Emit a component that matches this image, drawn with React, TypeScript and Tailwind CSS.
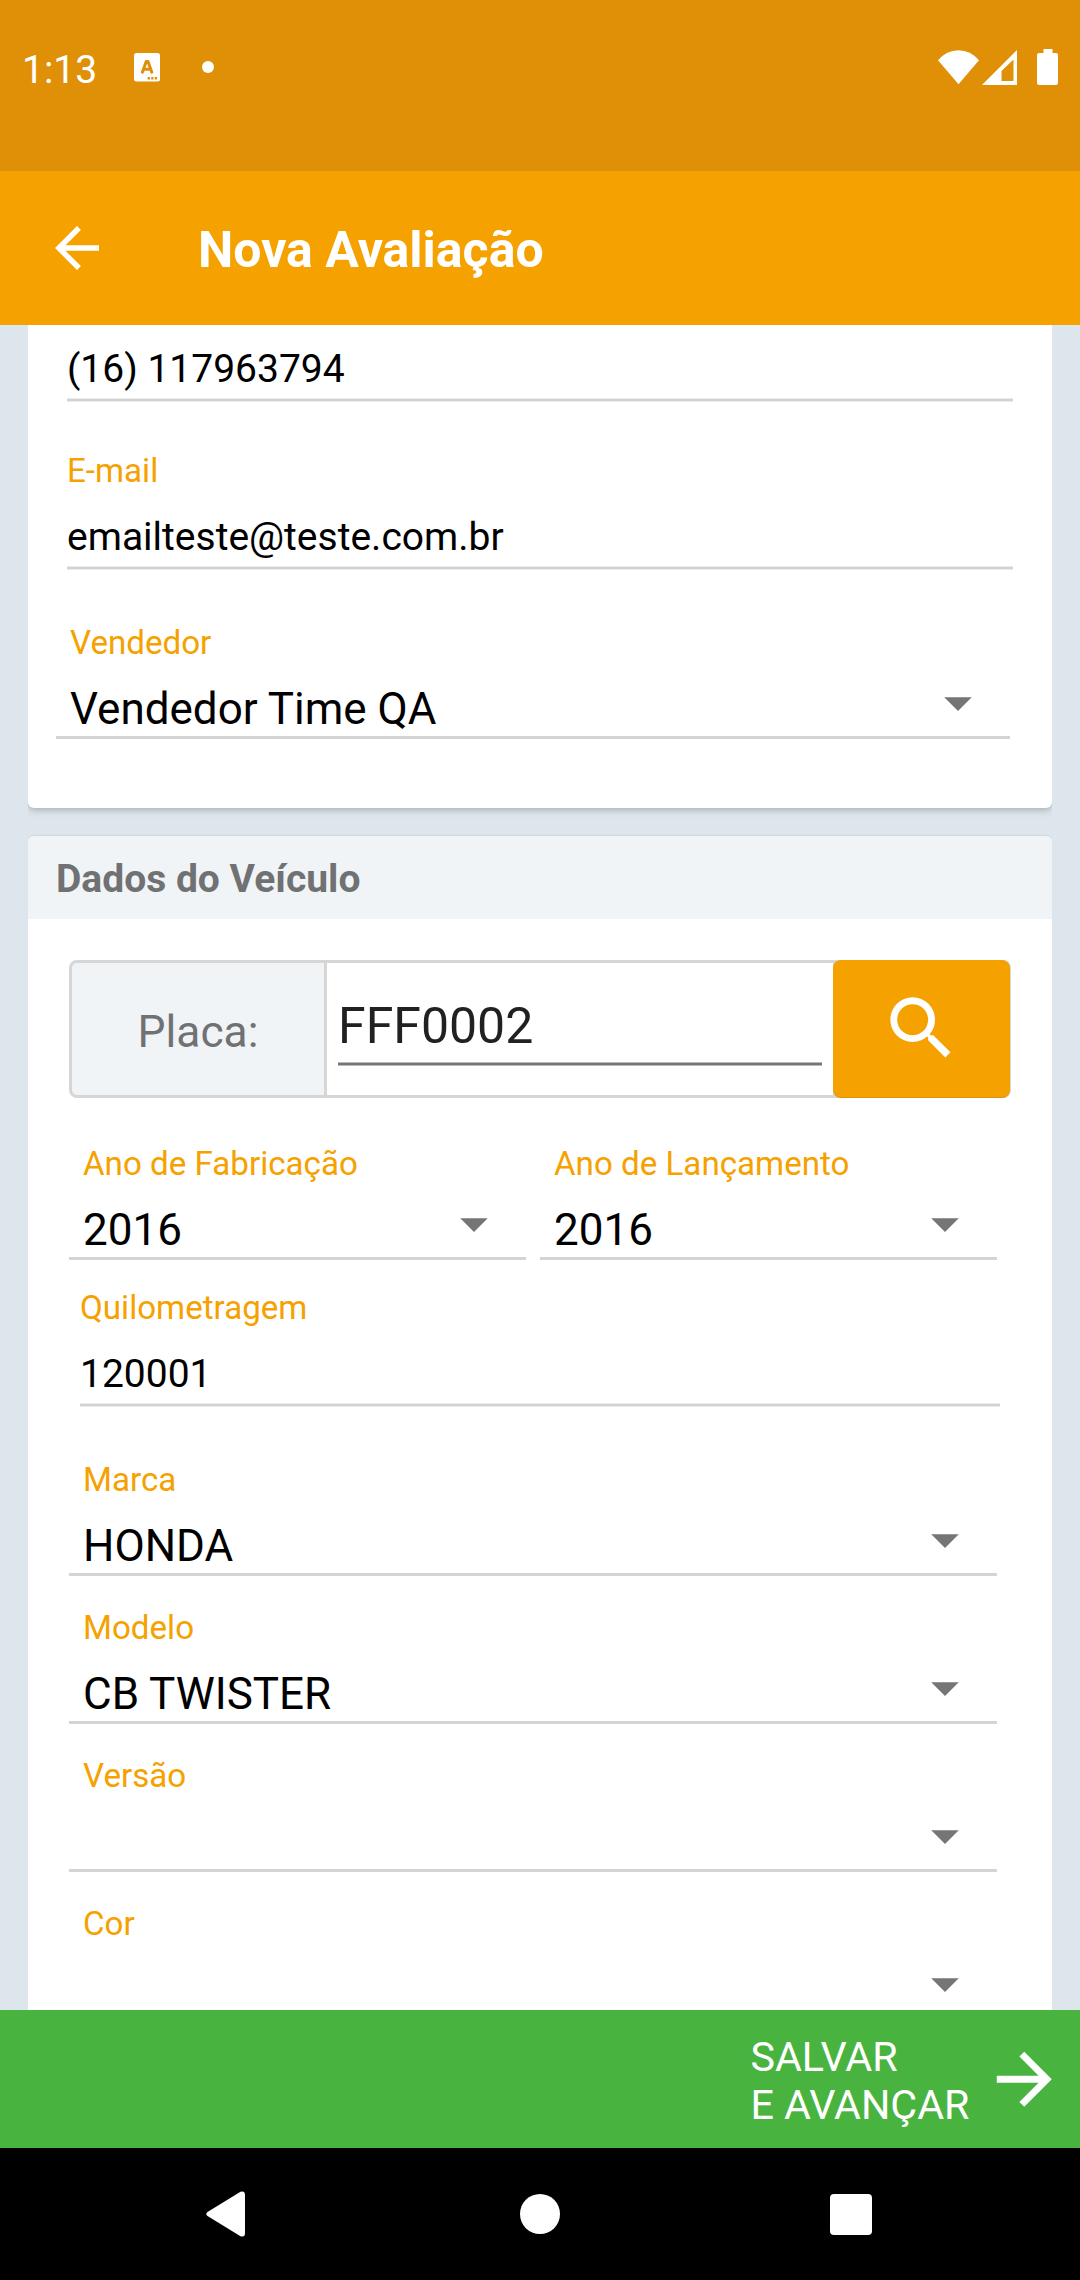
import type { ReactNode } from "react";

function Caret() {
  return (
    <svg className="mt-3.5 h-3.5 w-7 shrink-0" viewBox="0 0 28 14">
      <path d="M0.25 0.3h27.5L14 14z" fill="#757575" />
    </svg>
  );
}

function Label({ children }: { children: ReactNode }) {
  return <div className="h-10 text-[33.15px] leading-10 whitespace-nowrap text-[#f5a100]">{children}</div>;
}

function SelectField({ label, value, className = "" }: { label: string; value?: string; className?: string }) {
  return (
    <div className={`border-b-3 border-[#d4d4d4] pb-px ${className}`}>
      <div className="pr-[38px] pl-3.5">
        <Label>{label}</Label>
        <div className="mt-5 flex h-[52px] items-start justify-between">
          <span className="text-[44px] leading-[52px] text-black">{value}</span>
          <Caret />
        </div>
      </div>
    </div>
  );
}

function FieldLine() {
  return <div className="mt-1.5 h-1 border-y border-[#ebebeb] bg-[#d2d2d2]" />;
}

function TextValue({ children }: { children: ReactNode }) {
  return <div className="h-[46px] text-[39px] leading-[46px] text-black">{children}</div>;
}

function StatusBar() {
  return (
    <header className="flex h-[171px] shrink-0 items-start justify-between bg-[#df9007] pr-[22px] pl-[22px] text-white">
      <div className="flex items-start">
        <span className="mt-[47px] w-[111.5px] text-[39px] leading-[46px]">1:13</span>
        <svg className="mt-[53px] h-[29px] w-[26px]" viewBox="0 0 26 29">
          <rect width="26" height="28.5" rx="2.5" fill="#fff" />
          <path
            d="M8.4 19.200L12.200 8.500h1.800L17.800 19.200M9.800 16.300h6.600"
            fill="none"
            stroke="#df9007"
            strokeWidth="3"
            strokeLinecap="round"
            strokeLinejoin="round"
          />
          <path d="M13.600 25.200h2.300M17.200 25.200h2.300M20.800 25.200h2.300" stroke="#df9007" strokeWidth="2.400" />
        </svg>
        <span className="mt-[61px] ml-[42px] size-3 rounded-full bg-white" />
      </div>
      <div className="mt-[49px] flex items-start">
        <svg className="h-9 w-[41px]" viewBox="0 0 41 36">
          <path d="M0 11.300Q8.500 1.200 20.500 1.200T41 11.300L20.500 35.300z" fill="#fff" />
        </svg>
        <svg className="ml-[3px] h-9 w-[35px]" viewBox="0 0 35 36">
          <path fillRule="evenodd" d="M35 1v35H0zM31.500 10.500L19.500 22v10h12z" fill="#fff" />
        </svg>
        <svg className="ml-5 h-9 w-[21px]" viewBox="0 0 21 36">
          <path d="M6.500 0h9v4h3.500a2 2 0 0 1 2 2v28a2 2 0 0 1-2 2H2a2 2 0 0 1-2-2V6a2 2 0 0 1 2-2h4.500z" fill="#fff" />
        </svg>
      </div>
    </header>
  );
}

function PlateSearch() {
  return (
    <div className="mt-[41px] mr-[41px] ml-[41px] flex h-[138px] rounded-lg bg-[#d6d6d6] py-[3px] pl-[3px]">
      <div className="flex w-[252px] items-center justify-center rounded-l-[5px] bg-[#f0f4f7] pt-1.5 text-[44.3px] text-[#707173]">
        Placa:
      </div>
      <div className="ml-[3px] flex-1 bg-white pt-[34px] pr-[11px] pl-[11px]">
        <div className="h-[59px] text-[50px] leading-[58px] text-[#212121]">FFF0002</div>
        <div className="mt-1.5 h-1 border-y border-[#b9b9b9] bg-[#757575]" />
      </div>
      <div className="-my-[3px] mr-px flex w-[177px] items-center justify-center rounded-lg border-b border-[#dd920b] bg-[#f5a100]">
        <svg className="size-[82.5px]" viewBox="0 0 24 24" fill="#fff">
          <path d="M15.500 14h-.790l-.280-.270A6.471 6.471 0 0 0 16 9.500 6.500 6.500 0 1 0 9.500 16c1.610 0 3.090-.590 4.230-1.570l.270.280v.790l5 4.990L20.490 19l-4.990-5zm-6 0C7.010 14 5 11.990 5 9.500S7.010 5 9.500 5 14 7.010 14 9.500 11.990 14 9.500 14z" />
        </svg>
      </div>
    </div>
  );
}

export default function App() {
  return (
    <div className="flex h-[2280px] w-[1080px] flex-col overflow-hidden bg-[#dee6ed] font-[Roboto,sans-serif]">
      <StatusBar />
      <div className="flex h-[154px] shrink-0 items-center bg-[#f5a100] pl-11 text-white">
        <svg className="size-[66px]" viewBox="0 0 24 24" fill="#fff">
          <path d="M20 11H7.830l5.590-5.590L12 4l-8 8 8 8 1.410-1.410L7.830 13H20v-2z" />
        </svg>
        <h1 className="mt-1 ml-[88px] text-[50px] leading-[58px] font-bold">Nova Avaliação</h1>
      </div>

      <main className="flex h-[1685px] shrink-0 flex-col overflow-hidden px-7">
        <div className="shrink-0 overflow-hidden pb-7">
          <section className="rounded-b-md bg-white pt-[21px] pb-[69px] shadow-[0_2px_7px_rgba(90,110,100,0.45)]">
            <div className="mr-[39px] ml-[39px]">
              <TextValue>(16) 117963794</TextValue>
              <FieldLine />
            </div>
            <div className="mt-[49px] mr-[39px] ml-[39px]">
              <Label>E-mail</Label>
              <div className="mt-[23px]">
                <TextValue>emailteste@teste.com.br</TextValue>
              </div>
              <FieldLine />
            </div>
            <SelectField label="Vendedor" value="Vendedor Time QA" className="mt-[53px] mr-[42px] ml-7" />
          </section>
        </div>

        <section className="shrink-0 rounded-t-md bg-white shadow-[0_-1px_1px_#d0d5d8]">
          <h2 className="h-[83px] rounded-t-md bg-[#f0f4f7] pt-5 pl-7 text-[39px] leading-[46px] font-bold text-[#707173]">
            Dados do Veículo
          </h2>
          <PlateSearch />
          <div className="mt-[46px] mr-[55px] ml-[41px] grid grid-cols-2 gap-3.5">
            <SelectField label="Ano de Fabricação" value="2016" />
            <SelectField label="Ano de Lançamento" value="2016" />
          </div>
          <div className="mt-7 mr-[52px] ml-[52px]">
            <Label>Quilometragem</Label>
            <div className="mt-[23px]">
              <TextValue>120001</TextValue>
            </div>
            <FieldLine />
          </div>
          <div className="mt-[53px] mr-[55px] ml-[41px] flex flex-col gap-8">
            <SelectField label="Marca" value="HONDA" />
            <SelectField label="Modelo" value="CB TWISTER" />
            <SelectField label="Versão" />
            <SelectField label="Cor" />
          </div>
        </section>
      </main>

      <button className="flex h-[138px] shrink-0 items-center justify-end bg-[#49b33f] pr-[15px] text-left text-white">
        <span className="mt-[3px] mr-[13px] text-[41.25px] leading-12">
          SALVAR
          <br />E AVANÇAR
        </span>
        <svg className="size-[82.5px]" viewBox="0 0 24 24" fill="#fff">
          <path d="M12 4l-1.410 1.410L16.170 11H4v2h12.170l-5.580 5.590L12 20l8-8z" />
        </svg>
      </button>

      <nav className="flex h-[132px] shrink-0 items-center bg-black pl-[206px]">
        <svg className="h-[46px] w-[39px]" viewBox="0 0 39 46">
          <path d="M1.500 21L34.500 0.800Q39 -0.800 39 4V42Q39 46.800 34.500 45.200L1.500 25Q-1 23 1.500 21z" fill="#fff" />
        </svg>
        <span className="ml-[275px] size-10 rounded-full bg-white" />
        <span className="mt-px ml-[270px] size-[41.5px] rounded bg-white" />
      </nav>
    </div>
  );
}
